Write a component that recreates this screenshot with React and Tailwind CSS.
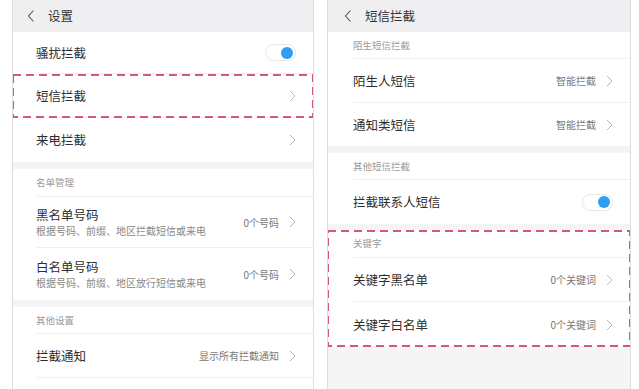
import React from 'react';

const font = "font-['Noto_Sans_CJK_SC','Noto_Sans',sans-serif]";

function Chevron() {
  return (
    <svg width="7" height="12" viewBox="0 0 7 12" className="shrink-0">
      <path d="M1 1l5 5-5 5" fill="none" stroke="#b5b5b5" strokeWidth="1" />
    </svg>
  );
}

function BackIcon() {
  return (
    <svg width="8" height="12" viewBox="0 0 8 12" className="shrink-0">
      <path d="M6.5 0.5L1.5 6l5 5.5" fill="none" stroke="#555" strokeWidth="1.1" />
    </svg>
  );
}

function Toggle() {
  return (
    <div className="w-[31px] h-[17px] rounded-full bg-white border border-[#e6e6e6] flex items-center justify-end pr-[2px]">
      <div className="w-[12px] h-[12px] rounded-full bg-[#2f9ef2]" />
    </div>
  );
}

function DashedBox() {
  return (
    <svg className="absolute inset-0 w-full h-full pointer-events-none" preserveAspectRatio="none">
      <rect x="1" y="1" fill="none" stroke="#d5577c" strokeWidth="2" strokeDasharray="8 5" style={{ width: 'calc(100% - 2px)', height: 'calc(100% - 2px)' }} />
    </svg>
  );
}

function Header({ title, pl }) {
  return (
    <div className={`h-[32px] bg-[#efeff1] flex items-center gap-[13px] ${pl}`}>
      <BackIcon />
      <span className="text-[12.5px] text-[#333]">{title}</span>
    </div>
  );
}

function Row({ title, sub, value, toggle, h, pl, last }) {
  return (
    <div className={`bg-white ${pl}`}>
      <div className={`${h} flex items-center pr-[17px] ${last ? '' : 'border-b border-[#f0f0f0]'}`}>
        <div className="flex-1 flex flex-col">
          <span className="text-[12.5px] leading-[16px] text-[#2e2e2e]">{title}</span>
          {sub && <span className="text-[10px] leading-[14px] text-[#888] mt-[1px]">{sub}</span>}
        </div>
        {value && <span className="text-[10px] text-[#777] mr-[10px]">{value}</span>}
        {toggle ? <Toggle /> : <Chevron />}
      </div>
    </div>
  );
}

function Label({ text, h, pl }) {
  return (
    <div className={`bg-white ${pl}`}>
      <div className={`${h} flex items-center border-b border-[#f0f0f0]`}>
        <span className="text-[9.5px] text-[#9a9a9a]">{text}</span>
      </div>
    </div>
  );
}

function Band() {
  return <div className="h-[7px] bg-[#f4f4f4]" />;
}

export default function App() {
  const lp = 'pl-[23px]';
  const rp = 'pl-[25px]';
  return (
    <div className={`w-[639px] h-[389px] bg-white flex pl-[12px] gap-[13px] overflow-hidden ${font}`}>
      <div className="w-[302px] h-full border-x border-[#dedede] flex flex-col overflow-hidden bg-white">
        <Header title="设置" pl="pl-[14px]" />
        <Row title="骚扰拦截" toggle h="h-[42px]" pl={lp} />
        <div className="relative">
          <Row title="短信拦截" h="h-[44px]" pl={lp} />
          <div className="absolute -left-px -right-px top-0 bottom-0">
            <DashedBox />
          </div>
        </div>
        <Row title="来电拦截" h="h-[44px]" pl={lp} last />
        <Band />
        <Label text="名单管理" h="h-[28px]" pl={lp} />
        <Row title="黑名单号码" sub="根据号码、前缀、地区拦截短信或来电" value="0个号码" h="h-[51px]" pl={lp} />
        <Row title="白名单号码" sub="根据号码、前缀、地区放行短信或来电" value="0个号码" h="h-[52px]" pl={lp} last />
        <Band />
        <Label text="其他设置" h="h-[27px]" pl={lp} />
        <Row title="拦截通知" value="显示所有拦截通知" h="h-[44px]" pl={lp} />
        <div className="flex-1 bg-white" />
      </div>

      <div className="w-[304px] h-full border-x border-[#dedede] flex flex-col overflow-hidden bg-[#f5f5f5]">
        <Header title="短信拦截" pl="pl-[16px]" />
        <Label text="陌生短信拦截" h="h-[27px]" pl={rp} />
        <Row title="陌生人短信" value="智能拦截" h="h-[44px]" pl={rp} />
        <Row title="通知类短信" value="智能拦截" h="h-[43px]" pl={rp} last />
        <Band />
        <Label text="其他短信拦截" h="h-[27px]" pl={rp} />
        <Row title="拦截联系人短信" toggle h="h-[44px]" pl={rp} last />
        <div className="h-[6px] bg-[#f5f5f5]" />
        <div className="relative">
          <Label text="关键字" h="h-[28px]" pl={rp} />
          <Row title="关键字黑名单" value="0个关键词" h="h-[44px]" pl={rp} />
          <Row title="关键字白名单" value="0个关键词" h="h-[45px]" pl={rp} last />
          <div className="absolute -left-px -right-px top-0 bottom-0">
            <DashedBox />
          </div>
        </div>
        <div className="flex-1" />
      </div>
    </div>
  );
}
